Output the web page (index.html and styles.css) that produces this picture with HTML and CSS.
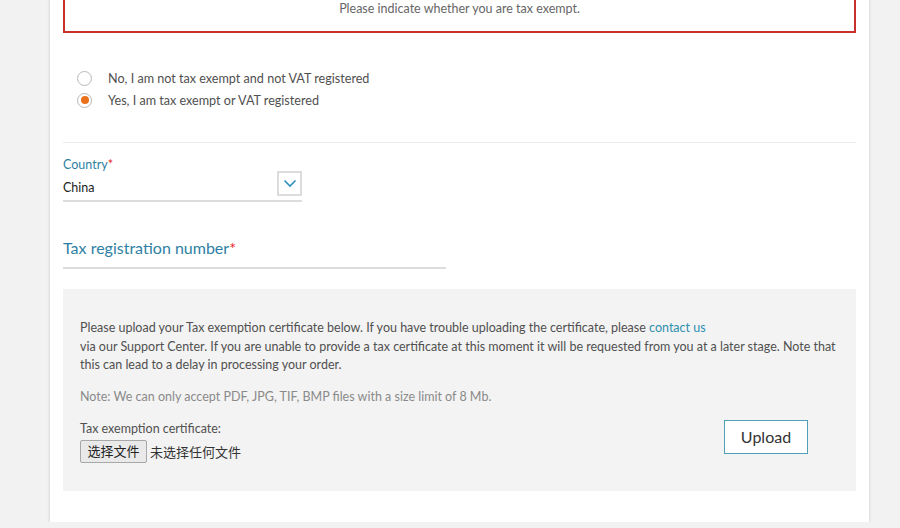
FILE: index.html
```html
<!DOCTYPE html>
<html>
<head>
<meta charset="utf-8">
<link rel="stylesheet" href="styles.css">
</head>
<body>
<div class="card">
  <div class="error-box">Please indicate whether you are tax exempt.</div>
  <div class="radios">
    <label class="radio"><span class="dot"></span>No, I am not tax exempt and not VAT registered</label>
    <label class="radio checked"><span class="dot"></span>Yes, I am tax exempt or VAT registered</label>
  </div>
  <div class="divider"></div>
  <div class="field country">
    <div class="label">Country<span class="req">*</span></div>
    <div class="select">
      <span class="value">China</span>
      <span class="arrow"><svg width="14" height="9" viewBox="0 0 14 9"><path d="M1.5 1.5 L7 7 L12.5 1.5" fill="none" stroke="#2e8fbf" stroke-width="1.6"/></svg></span>
    </div>
  </div>
  <div class="field taxnum">
    <div class="big-label">Tax registration number<span class="req">*</span></div>
  </div>
  <div class="panel">
    <p class="info">Please upload your Tax exemption certificate below. If you have trouble uploading the certificate, please <a href="#">contact us</a><br>via our Support Center. If you are unable to provide a tax certificate at this moment it will be requested from you at a later stage. Note that this can lead to a delay in processing your order.</p>
    <p class="note">Note: We can only accept PDF, JPG, TIF, BMP files with a size limit of 8 Mb.</p>
    <div class="upload-row">
      <div class="file-col">
        <div class="file-label">Tax exemption certificate:</div>
        <div class="file-input"><button class="file-btn">选择文件</button><span class="file-none">未选择任何文件</span></div>
      </div>
      <button class="upload-btn">Upload</button>
    </div>
  </div>
</div>
</body>
</html>
```

FILE: styles.css
```css
html, body {
  margin: 0;
  padding: 0;
  background: #f2f2f2;
  font-family: "Lato", "Noto Sans CJK SC", sans-serif;
  color: #505050;
}
.card {
  width: 819px;
  margin-left: 50px;
  margin-top: -40px;
  background: #fff;
  box-shadow: 0 1px 3px rgba(0,0,0,0.18);
  padding: 0 13px 31px 13px;
  box-sizing: border-box;
}
.error-box {
  border: 2px solid #c9302c;
  border-top: none;
  height: 73px;
  box-sizing: border-box;
  text-align: center;
  font-size: 12.5px;
  color: #666;
  padding-top: 41px;
}
.radios {
  padding: 36px 0 0 14px;
  display: flex;
  flex-direction: column;
  gap: 4px;
}
.radio {
  display: flex;
  align-items: center;
  font-size: 12.6px;
  color: #505050;
  height: 18px;
}
.dot {
  width: 15px;
  height: 15px;
  border: 1.5px solid #b8b8b8;
  border-radius: 50%;
  margin-right: 16px;
  box-sizing: border-box;
  display: inline-flex;
  align-items: center;
  justify-content: center;
  background: #fff;
}
.checked .dot::after {
  content: "";
  width: 8px;
  height: 8px;
  border-radius: 50%;
  background: #e9711c;
}
.divider {
  height: 1px;
  background: #ececec;
  margin-top: 33px;
}
.country {
  width: 239px;
  padding-top: 14px;
}
.label {
  font-size: 12.5px;
  color: #2e7fa3;
  line-height: 16px;
}
.req { color: #e9261c; }
.select {
  display: flex;
  align-items: center;
  justify-content: space-between;
  border-bottom: 2px solid #dcdcdc;
  height: 29px;
  margin-top: -2px;
}
.value {
  font-size: 12.5px;
  color: #222;
  padding-top: 3px;
}
.arrow {
  width: 25px;
  height: 25px;
  border: 2px solid #dcdcdc;
  box-sizing: border-box;
  display: flex;
  align-items: center;
  justify-content: center;
  margin-bottom: 4px;
}
.taxnum {
  width: 383px;
  margin-top: 36px;
  border-bottom: 2px solid #dcdcdc;
  padding-bottom: 9px;
}
.big-label {
  font-size: 16px;
  color: #2e7fa3;
  line-height: 20px;
}
.panel {
  margin-top: 20px;
  background: #f3f3f3;
  padding: 30px 17px 30px 17px;
  height: 202px;
  box-sizing: border-box;
}
.info {
  margin: 0;
  font-size: 12.5px;
  line-height: 18.5px;
  color: #505050;
}
.info a {
  color: #2e8fb0;
  text-decoration: none;
}
.note {
  margin: 13px 0 0 0;
  font-size: 12.5px;
  color: #8a8a8a;
  line-height: 18px;
}
.upload-row {
  display: flex;
  justify-content: space-between;
  align-items: flex-start;
  margin-top: 14px;
  padding-right: 31px;
}
.file-label {
  font-size: 12.5px;
  color: #505050;
  line-height: 16px;
  margin-top: 1px;
}
.file-input {
  display: flex;
  align-items: center;
  margin-top: 3px;
}
.file-btn {
  font-family: "Noto Sans CJK SC", sans-serif;
  font-size: 13px;
  color: #222;
  background: #e9e9e9;
  border: 1px solid #a8a8a8;
  border-radius: 2px;
  height: 23px;
  width: 67px;
  padding: 0;
  line-height: 20px;
}
.file-none {
  font-family: "Noto Sans CJK SC", sans-serif;
  font-size: 13px;
  color: #333;
  margin-left: 3px;
}
.upload-btn {
  font-family: "Lato", sans-serif;
  font-size: 16px;
  color: #333;
  background: #fff;
  border: 1.5px solid #4f9fb8;
  width: 84px;
  height: 34px;
  padding: 0;
}
```
